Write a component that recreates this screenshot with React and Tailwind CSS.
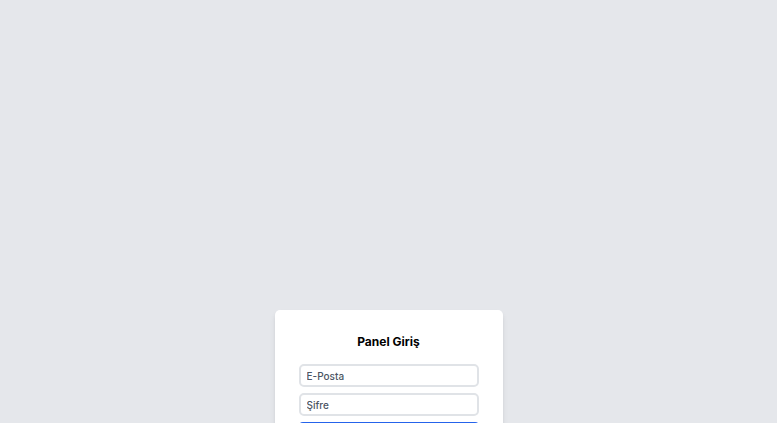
import React from "react";

const App = () => {
  return (
    <div
      className="min-h-screen bg-[#e5e7eb] flex justify-center pt-[310px]"
      style={{ fontFamily: "Inter, 'Noto Sans', sans-serif" }}
    >
      <div className="w-[228px] bg-white rounded-[5px] shadow-md px-6 pt-[22px] pb-6 self-start">
        <h1 className="text-center text-[12px] leading-5 font-bold text-black">
          Panel Giriş
        </h1>
        <form className="mt-3 flex flex-col gap-[6px]" onSubmit={(e) => e.preventDefault()}>
          <input
            type="text"
            placeholder="E-Posta"
            className="h-[23px] w-full border-2 border-[#e0e3e7] rounded-[5px] px-[6px] text-[10px] font-medium placeholder:text-[#4b5563] outline-0"
          />
          <input
            type="password"
            placeholder="Şifre"
            className="h-[23px] w-full border-2 border-[#e0e3e7] rounded-[5px] px-[6px] text-[10px] font-medium placeholder:text-[#4b5563] outline-0"
          />
          <button
            type="submit"
            className="h-[34px] w-full bg-[#2563eb] rounded-[4px] text-white text-[10px] font-semibold"
          >
            Giriş Yap
          </button>
        </form>
      </div>
    </div>
  );
};

export default App;
